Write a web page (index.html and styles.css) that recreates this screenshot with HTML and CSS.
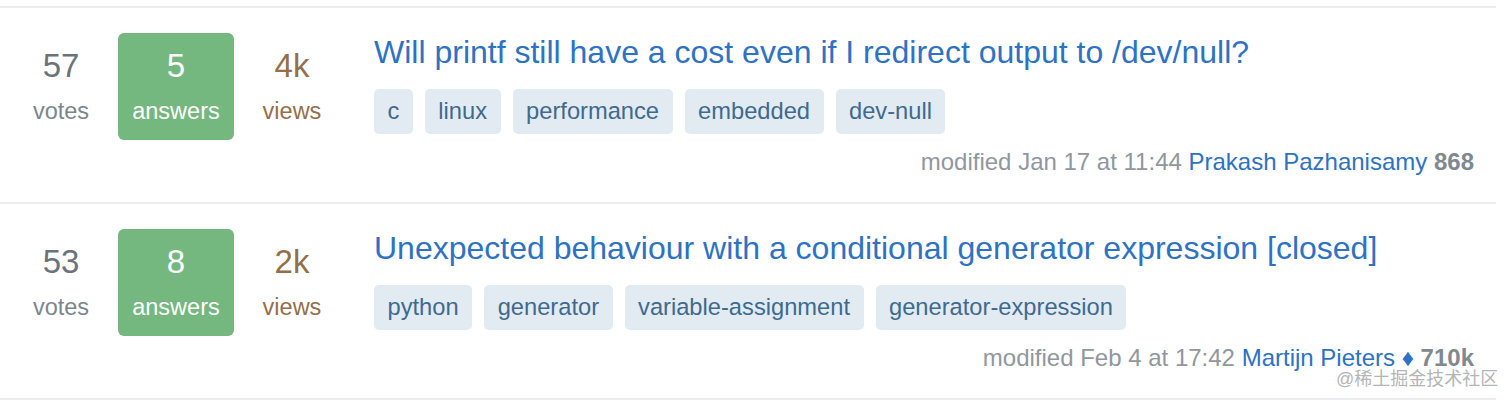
FILE: index.html
```html
<!DOCTYPE html>
<html lang="en">

<head>
    <meta charset="UTF-8">
    <meta name="viewport" content="width=device-width, initial-scale=1.0">
    <title>Questions</title>

    <link rel="stylesheet" href="styles.css">
</head>

<body>
    <div class="question-list">
        <div class="question-summary">
            <div class="stats">
                <div class="stat votes">
                    <span class="count">57</span>
                    <span class="label">votes</span>
                </div>
                <div class="stat answered">
                    <span class="count">5</span>
                    <span class="label">answers</span>
                </div>
                <div class="stat views">
                    <span class="count">4k</span>
                    <span class="label">views</span>
                </div>
            </div>
            <div class="summary">
                <a class="question-title" href="#">Will printf still have a cost even if I redirect output to /dev/null?</a>
                <div class="tags">
                    <a class="tag" href="#">c</a>
                    <a class="tag" href="#">linux</a>
                    <a class="tag" href="#">performance</a>
                    <a class="tag" href="#">embedded</a>
                    <a class="tag" href="#">dev-null</a>
                </div>
                <div class="meta">
                    modified Jan 17 at 11:44 <a class="user" href="#">Prakash Pazhanisamy</a> <b>868</b>
                </div>
            </div>
        </div>

        <div class="question-summary">
            <div class="stats">
                <div class="stat votes">
                    <span class="count">53</span>
                    <span class="label">votes</span>
                </div>
                <div class="stat answered">
                    <span class="count">8</span>
                    <span class="label">answers</span>
                </div>
                <div class="stat views">
                    <span class="count">2k</span>
                    <span class="label">views</span>
                </div>
            </div>
            <div class="summary">
                <a class="question-title" href="#">Unexpected behaviour with a conditional generator expression [closed]</a>
                <div class="tags">
                    <a class="tag" href="#">python</a>
                    <a class="tag" href="#">generator</a>
                    <a class="tag" href="#">variable-assignment</a>
                    <a class="tag" href="#">generator-expression</a>
                </div>
                <div class="meta">
                    modified Feb 4 at 17:42 <a class="user" href="#">Martijn Pieters</a> <span class="mod">&#9830;</span> <b>710k</b>
                </div>
            </div>
        </div>
    </div>

    <div class="watermark">@稀土掘金技术社区</div>
</body>

</html>
```

FILE: styles.css
```css
* {
    margin: 0;
    padding: 0;
    box-sizing: border-box;
    font-family: "Liberation Sans", Arial, sans-serif;
}
body {
    background-color: #fff;
    padding-top: 6px;
}
a {
    text-decoration: none;
}
.question-list {
    width: 1496px;
    border-bottom: 2px solid #ececec;
}
.question-summary {
    display: flex;
    border-top: 2px solid #ececec;
    padding: 24px 22px 25px 21px;
}
.stats {
    display: flex;
    align-items: flex-start;
    margin-top: 1px;
}
.stat {
    display: flex;
    flex-direction: column;
    align-items: center;
    width: 80px;
    padding: 11px 0 6px;
}
.stat .count {
    font-size: 33px;
    line-height: 44px;
}
.stat .label {
    font-size: 23.5px;
    line-height: 46px;
}
.votes {
    color: #6a737c;
}
.votes .label {
    color: #7d858c;
}
.answered {
    width: 116px;
    margin: 0 18px 0 17px;
    background-color: #74b77f;
    border-radius: 6px;
    color: #fff;
}
.views {
    color: #946f49;
}
.summary {
    flex: 1;
    margin-left: 42px;
}
.question-title {
    display: block;
    font-size: 32px;
    line-height: 40px;
    color: #2d72c4;
}
.tags {
    display: flex;
    gap: 12px;
    margin-top: 17px;
}
.tag {
    display: block;
    height: 45px;
    line-height: 45px;
    padding: 0 13.5px;
    font-size: 23.7px;
    color: #3e6a8f;
    background-color: #e3ebf2;
    border-radius: 5px;
}
.meta {
    margin-top: 13px;
    text-align: right;
    font-size: 24px;
    line-height: 30px;
    color: #90979e;
}
.meta .user,
.meta .mod {
    color: #2d72c4;
}
.meta b {
    color: #808890;
}
.watermark {
    position: absolute;
    left: 1336px;
    top: 367px;
    font-size: 18px;
    line-height: 24px;
    color: #b5b5b5;
    font-family: "Liberation Sans", "Noto Sans CJK SC", sans-serif;
}
```
